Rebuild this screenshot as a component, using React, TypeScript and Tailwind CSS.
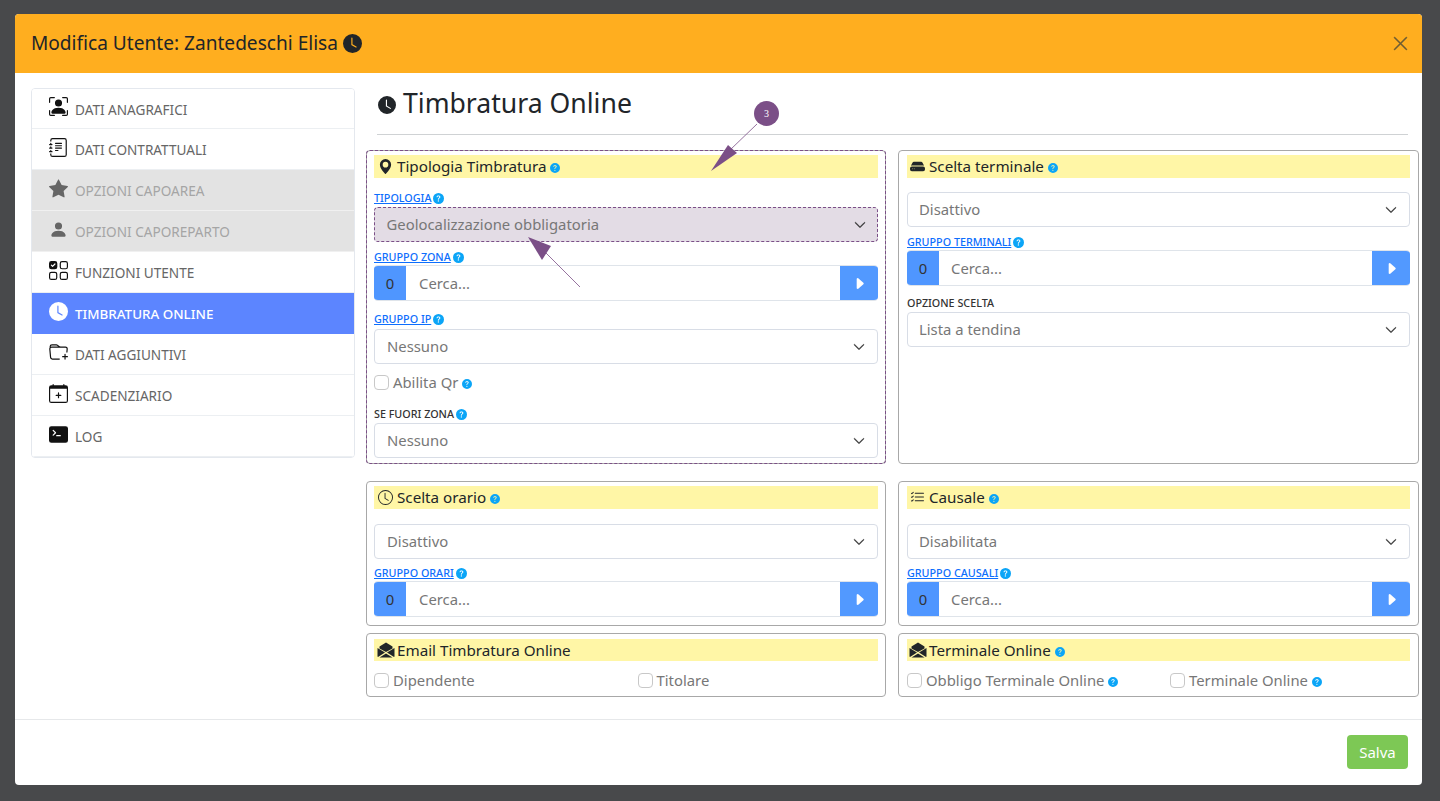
import React from "react";
import {
  BsPersonBoundingBox, BsJournalText, BsStarFill, BsPersonFill, BsUiChecksGrid, BsClockFill,
  BsFolderPlus, BsCalendarPlus, BsTerminalFill, BsGeoAltFill, BsClock, BsListCheck,
  BsHddFill, BsQuestionCircleFill, BsCaretRightFill, BsChevronDown, BsXLg,
} from "react-icons/bs";

const menu = [
  { t: "DATI ANAGRAFICI", I: BsPersonBoundingBox, first: true },
  { t: "DATI CONTRATTUALI", I: BsJournalText },
  { t: "OPZIONI CAPOAREA", I: BsStarFill, off: true },
  { t: "OPZIONI CAPOREPARTO", I: BsPersonFill, off: true },
  { t: "FUNZIONI UTENTE", I: BsUiChecksGrid },
  { t: "TIMBRATURA ONLINE", I: BsClockFill, on: true },
  { t: "DATI AGGIUNTIVI", I: BsFolderPlus },
  { t: "SCADENZIARIO", I: BsCalendarPlus },
  { t: "LOG", I: BsTerminalFill },
];

function MailIcon() {
  return (
    <svg width="18" height="16" viewBox="0 0 18 16" className="ml-[-1px] mr-[2px] shrink-0">
      <path d="M9 0.5 L15.5 4.5 L15.5 6.5 L9 10 L2.5 6.5 L2.5 4.5 Z" fill="#212529" />
      <path d="M0.5 6 L8 10.6 L1 15 Q0.5 15 0.5 14 Z" fill="#212529" />
      <path d="M17.5 6 L10 10.6 L17 15 Q17.5 15 17.5 14 Z" fill="#212529" />
      <path d="M9 11.5 L15.5 15.5 L2.5 15.5 Z" fill="#212529" />
    </svg>
  );
}

function Help({ s = 10 }: { s?: number }) {
  return <BsQuestionCircleFill size={s} className="inline-block shrink-0 text-[#0ba5f7]" />;
}

function Heading({ I, t, help = true, custom, big, right }: { I?: React.ElementType; t: string; help?: boolean; custom?: React.ReactNode; big?: boolean; right?: boolean }) {
  return (
    <div className={"flex items-center bg-[#fff6a6] text-[15.2px] text-[#212529] " + (big ? "h-[23px] " : "h-[22px] ") + (right ? "pl-[3px]" : "pl-[4px]")}>
      {custom ?? (I && <I size={15} className="mr-[4px] w-[15px] shrink-0 text-[#212529]" />)}
      <span>{t}</span>
      {help && <span className="ml-[4px] mt-[3px] flex"><Help /></span>}
    </div>
  );
}

function Label({ t, link, help = true }: { t: string; link?: boolean; help?: boolean }) {
  return (
    <div className="flex h-[12px] items-center gap-[2px] text-[10.75px] font-medium leading-[12px]">
      <span className={link ? "text-[#0d6efd] underline" : "text-[#333]"}>{t}</span>
      {help && <Help s={11} />}
    </div>
  );
}

function Select({ t, mark, right }: { t: string; mark?: boolean; right?: boolean }) {
  return (
    <div
      className={
        "flex h-[35px] items-center justify-between rounded-[4px] text-[14.85px] text-[#777] " +
        (mark
          ? "border-[1.5px] border-dashed border-[#7b4f87] bg-[#e3dce5] pl-[11.5px] pr-[11px]"
          : "border border-[#d8dde6] bg-white pr-[12px] " + (right ? "pl-[11px]" : "pl-[12px]"))
      }
    >
      <span>{t}</span>
      <BsChevronDown size={12} className="text-[#333]" strokeWidth={0.8} />
    </div>
  );
}

function Search({ right }: { right?: boolean }) {
  return (
    <div className="flex h-[36px] overflow-hidden rounded-[4px] border-y border-[#dfe4ea] text-[14.85px]">
      <div className="flex w-[32px] items-center justify-center bg-[#4f96ff] text-[#333]">0</div>
      <div className={"flex flex-1 items-center bg-white text-[#777] " + (right ? "pl-[12px]" : "pl-[13px]")}>Cerca...</div>
      <div className="flex w-[38px] items-center justify-center bg-[#5299ff] text-white">
        <BsCaretRightFill size={15} />
      </div>
    </div>
  );
}

function Check({ t, help }: { t: string; help?: boolean }) {
  return (
    <div className="flex items-center text-[14.85px] leading-[20px] text-[#777]">
      <span className="mr-[4px] h-[15px] w-[15px] rounded-[4px] border border-[#c8c8c8] bg-white" />
      <span>{t}</span>
      {help && <span className="ml-[4px] mt-[3px] flex"><Help /></span>}
    </div>
  );
}

function Card({ children, h, mark, right }: { children: React.ReactNode; h: string; mark?: boolean; right?: boolean }) {
  return (
    <section
      className={
        "rounded-[4px] border border-[#a8a8a8] pt-[4px] " + h + " " +
        (right ? "px-[8px] " : "px-[7px] ") +
        (mark ? "outline-[1.5px] outline-dashed -outline-offset-1 outline-[#7b4f87]" : "")
      }
    >
      {children}
    </section>
  );
}

export default function App() {
  return (
    <div
      className="relative h-[801px] w-[1440px] overflow-hidden bg-[#48494b] pl-[15px] pt-[14px]"
      style={{ fontFamily: '"Noto Sans", sans-serif' }}
    >
      <div className="flex h-[771px] w-[1407px] flex-col overflow-hidden rounded-[4px] bg-white">
        <header className="flex h-[59px] shrink-0 items-center justify-between bg-[#ffae1f] pl-[16px] pr-[13px]">
          <h1 className="flex items-center text-[19.1px] text-[#212529]">
            Modifica Utente: Zantedeschi Elisa
            <BsClockFill size={19} className="ml-[5px]" />
          </h1>
          <BsXLg size={17} className="stroke-[0.5] text-[#6a5a35]" stroke="currentColor" />
        </header>

        <div className="flex h-[647px] shrink-0 border-b border-[#e6e8ea] pl-[16px] pt-[15px]">
          <nav className="h-[370px] w-[324px] shrink-0 overflow-hidden rounded-[4px] border border-[#e4e8ee]">
            {menu.map(({ t, I, off, on, first }) => (
              <div
                key={t}
                className={
                  "flex items-center border-b pl-[17px] " +
                  (first ? "h-[40px] " : "h-[41px] ") +
                  (on
                    ? "border-[#5c85ff] bg-[#5c85ff] text-[13.4px] font-medium text-white"
                    : off
                    ? "border-[#f0f0f0] bg-[#e3e3e3] text-[13.6px] text-[#a5a5a5]"
                    : "border-[#eceff2] bg-white text-[13.6px] text-[#666]")
                }
              >
                <I size={19} className={"mb-[4px] mr-[7px] shrink-0 " + (on ? "text-white" : off ? "text-[#666]" : "text-[#111]")} />
                <span className="mt-[3px]">{t}</span>
              </div>
            ))}
          </nav>

          <main className="ml-[11px] w-[1053px]">
            <div className="mx-[11px] flex h-[47px] items-center border-b border-[#cfd2d4] pb-[14px]">
              <h2 className="flex items-center text-[26.6px] text-[#212529]">
                <BsClockFill size={18} className="ml-[1px] mr-[7px] mt-[2px]" />
                Timbratura Online
              </h2>
            </div>

            <div className="mt-[15px] grid grid-cols-[520px_521px] gap-x-[12px]">
              <div>
                <Card h="h-[314px]" mark>
                  <Heading big I={BsGeoAltFill} t="Tipologia Timbratura" />
                  <div className="mt-[14px]"><Label t="TIPOLOGIA" link /></div>
                  <div className="mt-[3px]"><Select t="Geolocalizzazione obbligatoria" mark /></div>
                  <div className="mt-[9px]"><Label t="GRUPPO ZONA" link /></div>
                  <div className="mt-[2px]"><Search /></div>
                  <div className="mt-[12px]"><Label t="GRUPPO IP" link /></div>
                  <div className="mt-[4px]"><Select t="Nessuno" /></div>
                  <div className="mt-[8px]"><Check t="Abilita Qr" help /></div>
                  <div className="mt-[16px]"><Label t="SE FUORI ZONA" /></div>
                  <div className="mt-[3px]"><Select t="Nessuno" /></div>
                </Card>
              </div>
              <div>
                <Card h="h-[314px]" right>
                  <Heading big right I={BsHddFill} t="Scelta terminale" />
                  <div className="mt-[14px]"><Select right t="Disattivo" /></div>
                  <div className="mt-[9px]"><Label t="GRUPPO TERMINALI" link /></div>
                  <div className="mt-[2px]"><Search right /></div>
                  <div className="mt-[11px]"><Label t="OPZIONE SCELTA" help={false} /></div>
                  <div className="mt-[3px]"><Select right t="Lista a tendina" /></div>
                </Card>
              </div>

              <div className="mt-[17px]">
                <Card h="h-[145px]">
                  <Heading big I={BsClock} t="Scelta orario" />
                  <div className="mt-[15px]"><Select t="Disattivo" /></div>
                  <div className="mt-[8px]"><Label t="GRUPPO ORARI" link /></div>
                  <div className="mt-[2px]"><Search /></div>
                </Card>
              </div>
              <div className="mt-[17px]">
                <Card h="h-[145px]" right>
                  <Heading big right I={BsListCheck} t="Causale" />
                  <div className="mt-[15px]"><Select right t="Disabilitata" /></div>
                  <div className="mt-[8px]"><Label t="GRUPPO CAUSALI" link /></div>
                  <div className="mt-[2px]"><Search right /></div>
                </Card>
              </div>

              <div className="mt-[7px]">
                <Card h="h-[64px]">
                  <div className="pt-[1px]">
                    <Heading custom={<MailIcon />} t="Email Timbratura Online" help={false} />
                  </div>
                  <div className="mt-[9px] grid grid-cols-2 gap-x-[11px]">
                    <Check t="Dipendente" />
                    <div className="pl-[6px]"><Check t="Titolare" /></div>
                  </div>
                </Card>
              </div>
              <div className="mt-[7px]">
                <Card h="h-[64px]" right>
                  <div className="pt-[1px]">
                    <Heading right custom={<MailIcon />} t="Terminale Online" />
                  </div>
                  <div className="mt-[9px] grid grid-cols-2 gap-x-[11px]">
                    <Check t="Obbligo Terminale Online" help />
                    <div className="pl-[6px]"><Check t="Terminale Online" help /></div>
                  </div>
                </Card>
              </div>
            </div>
          </main>
        </div>

        <footer className="flex flex-1 items-start justify-end pr-[14px] pt-[15px]">
          <button className="h-[34px] w-[61px] rounded-[4px] bg-[#7dc855] text-[15px] text-white">Salva</button>
        </footer>
      </div>

      <svg className="pointer-events-none absolute left-0 top-0" width="1440" height="801">
        <line x1="757" y1="124" x2="730" y2="150" stroke="#7b4f87" strokeWidth="0.8" />
        <polygon points="711,171 728,145 737,153" fill="#7b4f87" />
        <line x1="580" y1="287" x2="546" y2="253" stroke="#7b4f87" strokeWidth="0.8" />
        <polygon points="528,237 551,246 542,260" fill="#7b4f87" />
      </svg>
      <div
        className="absolute left-[754px] top-[101px] flex h-[25px] w-[25px] items-center justify-center rounded-full bg-[#7b4f87] text-[10px] text-white"
        style={{ fontFamily: '"Liberation Serif", serif' }}
      >
        3
      </div>
    </div>
  );
}
